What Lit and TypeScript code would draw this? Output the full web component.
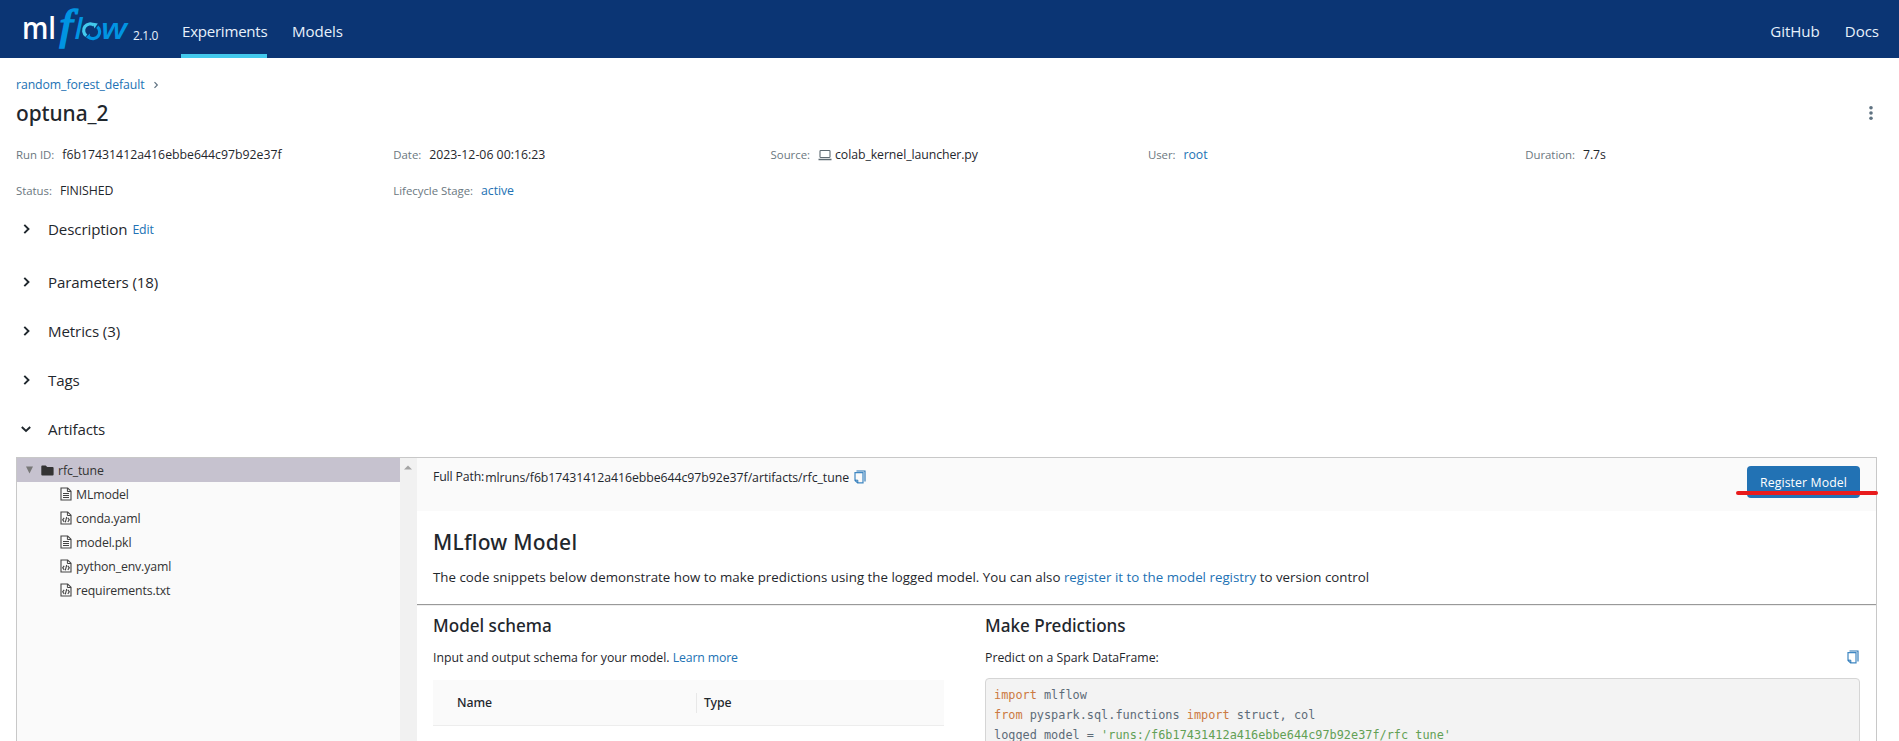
import { LitElement, html, svg, css } from "lit";
import { customElement } from "lit/decorators.js";

type FileKind = "text" | "code";

const META: { label: string; value: string; kind?: "link" | "laptop" | "num" }[] = [
  { label: "Run ID:", value: "f6b17431412a416ebbe644c97b92e37f", kind: "num" },
  { label: "Date:", value: "2023-12-06 00:16:23", kind: "num" },
  { label: "Source:", value: "colab_kernel_launcher.py", kind: "laptop" },
  { label: "User:", value: "root", kind: "link" },
  { label: "Duration:", value: "7.7s" },
  { label: "Status:", value: "FINISHED" },
  { label: "Lifecycle Stage:", value: "active", kind: "link" },
];

const FILES: [string, FileKind][] = [
  ["MLmodel", "text"],
  ["conda.yaml", "code"],
  ["model.pkl", "text"],
  ["python_env.yaml", "code"],
  ["requirements.txt", "code"],
];

const copyIcon = html`<svg class="copy" width="12" height="14" viewBox="0 0 12 14">
  <path d="M2.5 1H11V11.6" fill="none" stroke="#2272b4" stroke-width="1.1" />
  <path d="M1 2.6H9V12.9H3.6L1 10.4Z" fill="none" stroke="#3f87c2" stroke-width="1.2" />
  <path d="M1 10.2H3.8V12.9" fill="none" stroke="#2272b4" stroke-width="1" />
</svg>`;

const fileIcon = (kind: FileKind) => html`<svg class="file" width="12" height="14" viewBox="0 0 12 14">
  <path d="M1 1H7.7L11 4.2V13H1Z" fill="none" stroke="#444" stroke-width="1.1" />
  <path d="M7.4 1V4.5H11" fill="none" stroke="#444" stroke-width="1" />
  ${kind === "text"
    ? svg`<path d="M3 6.5H9M3 8.5H9M3 10.5H9" stroke="#444" stroke-width="1" />`
    : svg`<path d="M4.2 6.8L2.7 8.8L4.2 10.8M7.8 6.8L9.3 8.8L7.8 10.8M6.7 6L5.3 11.4" fill="none" stroke="#444" stroke-width="1.1" />`}
</svg>`;

@customElement("app-nav")
class AppNav extends LitElement {
  static styles = css`
    :host { display: flex; height: 58px; box-sizing: border-box; background: #0b3574; color: #e7f1fb;
      font: 15.1px/58px "Open Sans", sans-serif; padding: 0 20px 0 23px; }
    .logo { flex: none; width: 106px; height: 58px; display: block; }
    .ml { font: 600 30px "Open Sans", sans-serif; fill: #fff; }
    .f { font: italic 43px "Liberation Serif", serif; fill: #0194e2; stroke: #0194e2; stroke-width: 1.7px; }
    .lw { font: italic 600 29px "Open Sans", sans-serif; fill: #0194e2; }
    .ver { width: 48px; box-sizing: border-box; padding: 7px 0 0 4px; font-size: 12px; letter-spacing: -0.4px; }
    .tab { height: 58px; box-sizing: border-box; padding: 2px 0 0; margin: 0 24px 0 0; white-space: nowrap; }
    .first { width: 86px; margin-left: 4px; letter-spacing: -0.26px; padding-left: 1px; border-bottom: 4px solid #43c9ed; margin-right: 25px; }
    .grow { flex: 1; }
    .right { margin: 0 0 0 25px; letter-spacing: -0.05px; }
  `;
  render() {
    return html`<svg class="logo" viewBox="23 0 106 58">
        <text class="ml" x="22" y="39" textLength="34" lengthAdjust="spacingAndGlyphs">ml</text>
        <text class="f" transform="translate(59.6 38.8) scale(1.08 1)">f</text>
        <text class="lw" x="74.5" y="39">l</text>
        <g fill="none" stroke-width="3.2">
          <path d="M86.3 35.8A6.6 6.6 0 0 1 94.2 25.2" stroke="#43c9ed" />
          <path d="M97.3 26.8A6.6 6.6 0 0 1 88.6 37" stroke="#0194e2" />
        </g>
        <path d="M93 22.8L97.8 23.6L94.4 28.6Z" fill="#43c9ed" />
        <path d="M89.5 39.4L85.8 37.2L90 33.4Z" fill="#0194e2" />
        <text class="lw" x="101" y="39" textLength="26" lengthAdjust="spacingAndGlyphs">w</text>
      </svg>
      <div class="ver">2.1.0</div>
      <div class="tab first">Experiments</div>
      <div class="tab">Models</div>
      <div class="grow"></div>
      <div class="tab right">GitHub</div>
      <div class="tab right">Docs</div>`;
  }
}

@customElement("app-root")
class AppRoot extends LitElement {
  static styles = css`
    :host { display: block; width: 1899px; height: 741px; overflow: hidden; background: #fff; color: #1f272d;
      font: 12.3px/20px "Open Sans", sans-serif; letter-spacing: -0.08px; position: relative; }
    div, span { white-space: nowrap; }
    svg { display: block; flex: none; }
    a { color: #2272b4; }
    .crumbs { display: flex; align-items: center; height: 20px; padding: 17px 0 0 16px; gap: 8px; letter-spacing: -0.1px; }
    .title { display: flex; justify-content: space-between; height: 30px; align-items: center; padding: 3px 24px 0 16px; }
    .title h1 { margin: 0; font: 500 20.9px/30px "Noto Sans", sans-serif; letter-spacing: -0.05px; }
    .meta { display: grid; grid-template-columns: repeat(5, 377.3px); row-gap: 16px; padding: 17px 0 0 16px; }
    .item { display: flex; height: 20px; align-items: center; }
    .label { color: #6b7780; font-size: 11.4px; margin-right: 8px; letter-spacing: -0.02px; }
    .num { letter-spacing: 0; }
    .laptop { margin-right: 3px; }
    .section { display: flex; align-items: center; height: 49px; padding-left: 20px; font-size: 15.1px; letter-spacing: -0.11px; }
    .section svg { margin: 0 16px 0 0; }
    .desc { height: 57px; margin-top: -1px; }
    .desc a { font-size: 12.3px; margin: 3px 0 0 5px; }
    .panel { display: grid; grid-template-columns: 383px 17px 1fr; width: 1861px; height: 300px; box-sizing: border-box; margin: 4px 0 0 16px; border: 1px solid #c8c8c8; }
    .tree { background: #fafafa; color: #333; letter-spacing: -0.14px; }
    .row { display: flex; align-items: center; height: 24px; padding-left: 43px; }
    .row span { padding-top: 2px; }
    .row .file { margin-right: 4px; }
    .row.dir { background: #c6c2cf; padding-left: 9px; }
    .dir .tri { margin-right: 8px; }
    .dir .folder { margin-right: 4px; }
    .scroll { background: #f1f1f1; padding: 7px 0 0 4px; }
    .bar { display: flex; align-items: flex-start; height: 53px; background: #fafafa; padding: 8px 16px 0 16px; box-sizing: border-box; }
    .full { display: flex; flex: 1; padding-top: 2px; }
    .full .key { margin: -1px 1px 0 0; letter-spacing: -0.15px; }
    .full .path { letter-spacing: -0.05px; margin-right: 5px; }
    .full .copy { margin-top: 2px; }
    .btn { position: relative; width: 113px; height: 32px; border-radius: 4px; background: #2272b4; color: #fff; text-align: center; line-height: 33px; letter-spacing: 0.1px; }
    .mark { position: absolute; left: -11px; top: 25px; width: 142px; height: 4px; border-radius: 2px; background: #e81b1c; }
    .intro { height: 94px; box-sizing: border-box; padding: 16px 0 0 16px; border-bottom: 1px solid #999; box-shadow: 0 1px #eee; }
    .intro h2 { margin: 0; font: 500 21px/30px "Noto Sans", sans-serif; letter-spacing: 0.25px; }
    .intro p { margin: 10px 0 0; font-size: 13.3px; letter-spacing: 0.015px; }
    .cols { display: grid; grid-template-columns: 511px 875px; column-gap: 41px; padding: 9px 0 0 16px; }
    h3 { margin: 0; font: 500 17.1px/24px "Noto Sans", sans-serif; letter-spacing: 0; }
    .lead { display: flex; justify-content: space-between; align-items: flex-start; margin-top: 10px; padding-right: 1px; letter-spacing: -0.01px; }
    .lead .copy { margin-top: 2px; }
    .lead a { letter-spacing: -0.15px; }
    .table { display: grid; grid-template-columns: 263px 1fr; align-items: center; height: 45px; margin-top: 12px; background: #fafafa; border-bottom: 1px solid #ededed; font: 500 12.3px/20px "Noto Sans", sans-serif; }
    .table div { padding-left: 24px; }
    .table .type { padding-left: 7px; border-left: 1px solid #e8e8e8; }
    .code { margin: 10px 0 0; height: 80px; border: 1px solid #d5d5d5; border-radius: 4px; background: #f3f3f3; padding: 6px 8px; color: #5d6b78; font: 11.87px/20px "DejaVu Sans Mono", monospace; letter-spacing: 0; box-sizing: border-box; }
    .kw { color: #cc7a42; }
    .str { color: #62a055; }
  `;

  private chevron(open = false) {
    return html`<svg width="12" height="12" viewBox="0 0 12 12">
      <path d=${open ? "M1.8 4L6 8L10.2 4" : "M4.3 1.8L8.5 6L4.3 10.2"} fill="none" stroke="#1f272d" stroke-width="1.9" />
    </svg>`;
  }

  render() {
    return html`
      <app-nav></app-nav>
      <div class="crumbs"><a>random_forest_default</a>
        <svg width="6" height="8" viewBox="0 0 6 8"><path d="M1.5 1.2L4.3 4L1.5 6.8" fill="none" stroke="#5f7281" stroke-width="1.2" /></svg>
      </div>
      <div class="title"><h1>optuna_2</h1>
        <svg width="8" height="16" viewBox="0 0 8 16" fill="#5f7281"><circle cx="4" cy="2.7" r="1.8" /><circle cx="4" cy="8" r="1.8" /><circle cx="4" cy="13.3" r="1.8" /></svg>
      </div>
      <div class="meta">
        ${META.map((m) => html`<div class="item"><span class="label">${m.label}</span>${m.kind === "laptop"
          ? html`<svg class="laptop" width="14" height="12" viewBox="0 0 14 12"><rect x="2" y="1.5" width="10" height="7" rx=".8" fill="none" stroke="#5f6b73" stroke-width="1.1" /><path d="M.5 10.5H13.5" stroke="#5f6b73" stroke-width="1.5" /></svg>`
          : ""}${m.kind === "link" ? html`<a>${m.value}</a>` : html`<span class=${m.kind === "num" ? "num" : ""}>${m.value}</span>`}</div>`)}
      </div>
      <div class="section desc">${this.chevron()}<span>Description</span><a>Edit</a></div>
      <div class="section">${this.chevron()}<span>Parameters (18)</span></div>
      <div class="section">${this.chevron()}<span>Metrics (3)</span></div>
      <div class="section">${this.chevron()}<span>Tags</span></div>
      <div class="section">${this.chevron(true)}<span>Artifacts</span></div>
      <div class="panel">
        <div class="tree">
          <div class="row dir">
            <svg class="tri" width="7" height="8" viewBox="0 0 7 8"><path d="M0 .5H7L3.5 7.5Z" fill="#777" /></svg>
            <svg class="folder" width="13" height="11" viewBox="0 0 13 11"><path d="M1.2.5H4.7L6.2 2H11.6A1 1 0 0 1 12.6 3V9.4A1 1 0 0 1 11.6 10.4H1.3A1 1 0 0 1 .3 9.4V1.5A1 1 0 0 1 1.2.5Z" fill="#333" /></svg>
            <span>rfc_tune</span>
          </div>
          ${FILES.map(([name, kind]) => html`<div class="row">${fileIcon(kind)}<span>${name}</span></div>`)}
        </div>
        <div class="scroll"><svg width="8" height="5" viewBox="0 0 8 5"><path d="M0 4.5L4 .5L8 4.5Z" fill="#a3a3a3" /></svg></div>
        <div class="main">
          <div class="bar">
            <div class="full"><span class="key">Full Path:</span><span class="path">mlruns/f6b17431412a416ebbe644c97b92e37f/artifacts/rfc_tune</span>${copyIcon}</div>
            <div class="btn">Register Model<div class="mark"></div></div>
          </div>
          <div class="intro">
            <h2>MLflow Model</h2>
            <p>The code snippets below demonstrate how to make predictions using the logged model. You can also <a>register it to the model registry</a> to version control</p>
          </div>
          <div class="cols">
            <div>
              <h3>Model schema</h3>
              <div class="lead"><span>Input and output schema for your model. <a>Learn more</a></span></div>
              <div class="table"><div>Name</div><div class="type">Type</div></div>
            </div>
            <div>
              <h3>Make Predictions</h3>
              <div class="lead"><span>Predict on a Spark DataFrame:</span>${copyIcon}</div>
              <pre class="code"><span class="kw">import</span> mlflow
<span class="kw">from</span> pyspark.sql.functions <span class="kw">import</span> struct, col
logged_model = <span class="str">'runs:/f6b17431412a416ebbe644c97b92e37f/rfc_tune'</span></pre>
            </div>
          </div>
        </div>
      </div>`;
  }
}
